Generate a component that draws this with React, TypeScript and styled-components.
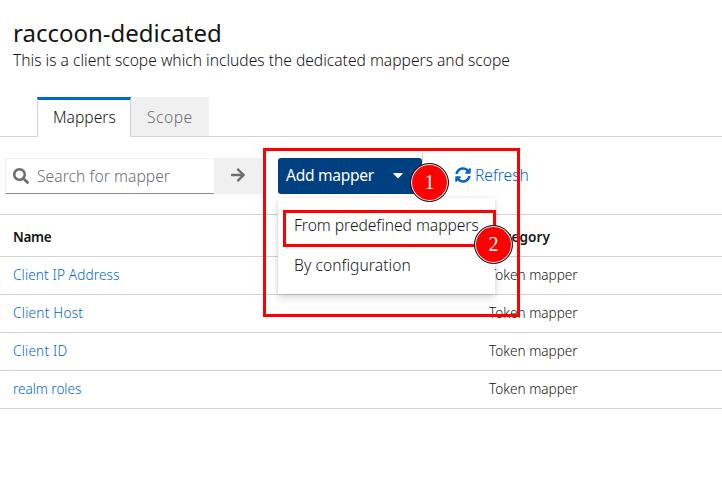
import React from "react";
import styled, { createGlobalStyle } from "styled-components";
import { FaSearch, FaArrowRight, FaCaretDown, FaSyncAlt } from "react-icons/fa";

const GlobalStyle = createGlobalStyle`
  *, *::before, *::after { box-sizing: border-box; }
  body { margin: 0; background: #fff; overflow: hidden; }
`;

const Page = styled.main`
  position: relative;
  width: 722px;
  height: 482px;
  background: #fff;
  color: #151515;
  font-family: "Noto Sans", sans-serif;
  font-size: 15.6px;
  font-weight: 300;
  line-height: 24px;
  white-space: nowrap;
`;

const Text = styled.span<{ $track?: number }>`
  letter-spacing: ${(p) => p.$track ?? 0}px;
`;

const Header = styled.header`
  height: 97px;
  padding: 17px 13px 0;
`;

const Title = styled.h1`
  margin: 0;
  font-size: 24px;
  font-weight: 400;
  line-height: 31px;
`;

const Subtitle = styled.p`
  margin: 0;
`;

const Tabs = styled.nav`
  display: flex;
  height: 40px;
  padding-left: 37px;
  box-shadow: inset 0 -1px #d2d2d2;
`;

const Tab = styled.button<{ $active?: boolean }>`
  height: ${(p) => (p.$active ? 40 : 39)}px;
  width: ${(p) => (p.$active ? 94 : 78)}px;
  padding: ${(p) => (p.$active ? "0 0 4px 15px" : "3px 0 3px 16px")};
  border: 0 solid #d2d2d2;
  border-width: ${(p) => (p.$active ? "3px 1px 0" : "0")};
  border-top-color: #06c;
  background: ${(p) => (p.$active ? "#fff" : "#f0f0f0")};
  color: ${(p) => (p.$active ? "#151515" : "#6a6e73")};
  font: inherit;
  text-align: left;
`;

const Toolbar = styled.div`
  display: flex;
  align-items: flex-start;
  height: 77px;
  padding: 21px 0 0 5px;
`;

const SearchField = styled.div`
  display: flex;
  align-items: center;
  gap: 8px;
  width: 209px;
  height: 36px;
  padding: 0 0 1px 7px;
  border: 1px solid #f0f0f0;
  border-bottom-color: #8a8d90;
  border-right: 0;
  color: #6a6e73;

  svg { width: 16px; height: 16px; }
`;

const SearchButton = styled.button`
  display: flex;
  align-items: center;
  justify-content: center;
  width: 48px;
  height: 36px;
  padding: 0 0 2px;
  border: 0;
  background: #f0f0f0;
  color: #6a6e73;
`;

const MenuAnchor = styled.div`
  position: relative;
  margin-left: 16px;
`;

const AddButton = styled.button`
  display: flex;
  align-items: center;
  justify-content: space-between;
  width: 144px;
  height: 36px;
  padding: 0 16px 2px 8px;
  border: 0;
  border-radius: 3px;
  background: #004080;
  color: #fff;
  font: inherit;
  font-weight: 400;
`;

const Divider = styled.span`
  width: 1px;
  height: 36px;
  margin-top: -5px;
  background: #d2d2d2;
`;

const Menu = styled.ul`
  position: absolute;
  top: 40px;
  left: 0;
  z-index: 1;
  width: 217px;
  height: 96px;
  margin: 0;
  padding: 7px 0;
  list-style: none;
  background: #fff;
  box-shadow: 0 4px 8px rgba(3, 3, 3, 0.14), 0 0 4px rgba(3, 3, 3, 0.08);
`;

const MenuItem = styled.li`
  height: 40px;
  padding: 8px 16px;
`;

const RefreshLink = styled.button`
  display: flex;
  align-items: center;
  gap: 4px;
  height: 36px;
  margin-left: 32px;
  padding: 0 0 2px;
  border: 0;
  background: transparent;
  color: #06c;
  font: inherit;
`;

const Table = styled.div`
  font-size: 13.6px;
  border-top: 1px solid #d2d2d2;
`;

const Row = styled.div<{ $head?: boolean }>`
  display: grid;
  grid-template-columns: 476px 1fr;
  align-items: center;
  height: ${(p) => (p.$head ? 42 : 38)}px;
  padding: ${(p) => (p.$head ? "2px 13px 0" : "0 13px 1px")};
  border-bottom: 1px solid #d2d2d2;
  font-weight: ${(p) => (p.$head ? 600 : 300)};
`;

const MapperLink = styled.a<{ $track?: number }>`
  color: #06c;
  letter-spacing: ${(p) => p.$track ?? 0}px;
`;

const Highlight = styled.div<{ $x: number; $y: number; $w: number; $h: number }>`
  position: absolute;
  z-index: 2;
  left: ${(p) => p.$x}px;
  top: ${(p) => p.$y}px;
  width: ${(p) => p.$w}px;
  height: ${(p) => p.$h}px;
  border: 3px solid #f00;
  pointer-events: none;
`;

const StepBadge = styled.div<{ $x: number; $y: number }>`
  position: absolute;
  z-index: 3;
  left: ${(p) => p.$x}px;
  top: ${(p) => p.$y}px;
  display: flex;
  align-items: center;
  justify-content: center;
  width: 39px;
  height: 39px;
  border-radius: 50%;
  border: 1.5px solid #111;
  background: #f00;
  box-shadow: inset 0 0 0 1px #fff;
  color: #fff;
  font: 20px "Liberation Serif", serif;
`;

const mappers = [
  { name: "Client IP Address", track: 0.14 },
  { name: "Client Host", track: 0.25 },
  { name: "Client ID", track: 0.2 },
  { name: "realm roles", track: -0.06 },
];

export default function App() {
  return (
    <>
      <GlobalStyle />
      <Page>
        <Header>
          <Title>raccoon-dedicated</Title>
          <Subtitle>This is a client scope which includes the dedicated mappers and scope</Subtitle>
        </Header>
        <Tabs>
          <Tab $active>Mappers</Tab>
          <Tab><Text $track={0.5}>Scope</Text></Tab>
        </Tabs>
        <Toolbar>
          <SearchField>
            <FaSearch />
            <Text $track={0.06}>Search for mapper</Text>
          </SearchField>
          <SearchButton aria-label="Search"><FaArrowRight size={16} /></SearchButton>
          <MenuAnchor>
            <AddButton>
              <Text $track={-0.3}>Add mapper</Text>
              <FaCaretDown size={16} />
            </AddButton>
            <Menu>
              <MenuItem><Text $track={-0.03}>From predefined mappers</Text></MenuItem>
              <MenuItem><Text $track={0.06}>By configuration</Text></MenuItem>
            </Menu>
          </MenuAnchor>
          <Divider />
          <RefreshLink>
            <FaSyncAlt size={16} />
            Refresh
          </RefreshLink>
        </Toolbar>
        <Table>
          <Row $head>
            <Text $track={-0.35}>Name</Text>
            <Text $track={0.1}>Category</Text>
          </Row>
          {mappers.map((m) => (
            <Row key={m.name}>
              <MapperLink $track={m.track}>{m.name}</MapperLink>
              <Text>Token mapper</Text>
            </Row>
          ))}
        </Table>
        <Highlight $x={263} $y={148} $w={257} $h={169} />
        <Highlight $x={283} $y={210} $w={213} $h={37} />
        <StepBadge $x={410} $y={163}>1</StepBadge>
        <StepBadge $x={474} $y={225}>2</StepBadge>
      </Page>
    </>
  );
}
